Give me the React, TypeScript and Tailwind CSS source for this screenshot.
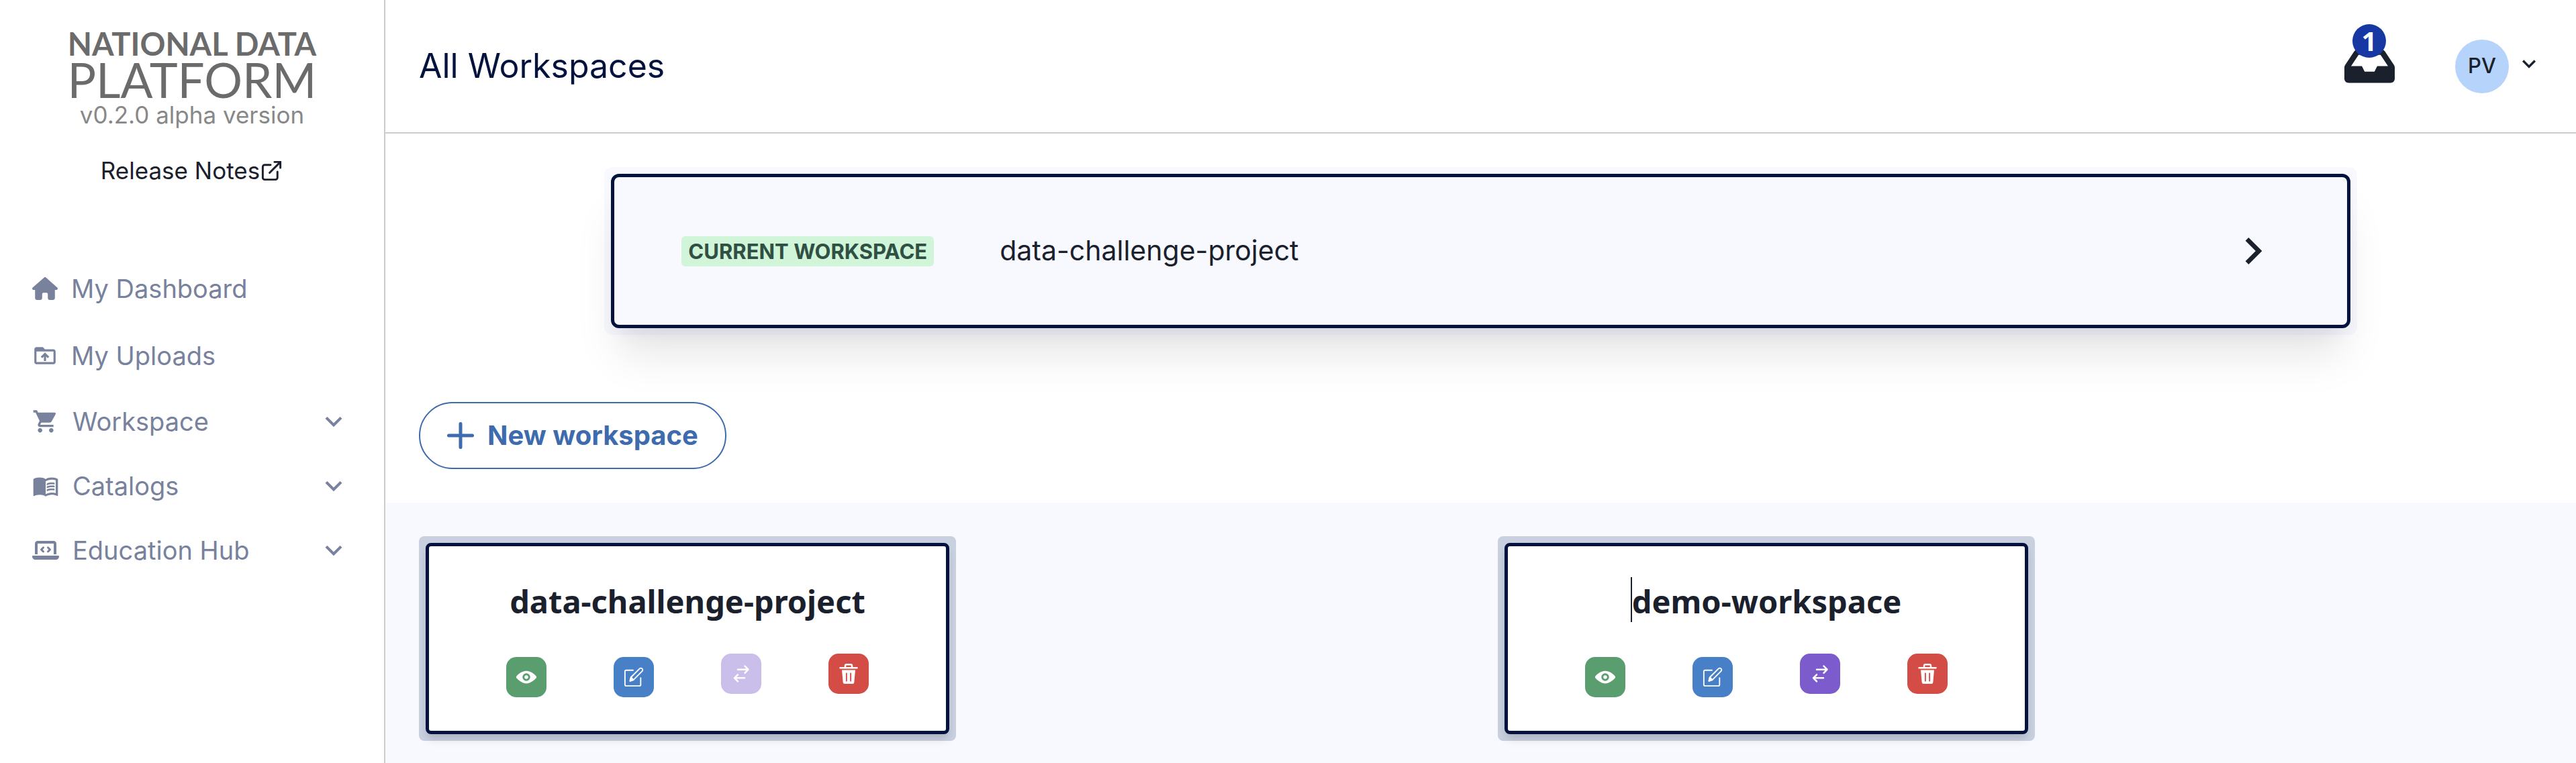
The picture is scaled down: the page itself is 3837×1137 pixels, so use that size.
import type { ReactNode } from "react";
import { FaHouse, FaLaptopCode } from "react-icons/fa6";
import { FaInbox } from "react-icons/fa";
import { MdDriveFolderUpload, MdMenuBook, MdShoppingCart } from "react-icons/md";

function ChevronDown({ className }: { className: string }) {
  return (
    <svg viewBox="0 0 24 24" className={className} aria-hidden="true">
      <path fill="currentColor" d="M16.59 8.59L12 13.17 7.41 8.59 6 10l6 6 6-6z" />
    </svg>
  );
}

function ChevronRight({ className }: { className: string }) {
  return (
    <svg viewBox="0 0 24 24" className={className} aria-hidden="true">
      <path fill="currentColor" d="M10 6L8.59 7.41 13.17 12l-4.58 4.59L10 18l6-6z" />
    </svg>
  );
}

function ExternalLinkIcon() {
  return (
    <svg
      viewBox="0 0 24 24"
      className="size-[35px]"
      fill="none"
      stroke="currentColor"
      strokeWidth="2"
      strokeLinecap="round"
      aria-hidden="true"
    >
      <path d="M18 13v6a2 2 0 0 1-2 2H5a2 2 0 0 1-2-2V8a2 2 0 0 1 2-2h6" />
      <path d="M15 3h6v6" />
      <path d="M10 14L20.500 3.500" />
    </svg>
  );
}

function PlusIcon() {
  return (
    <svg viewBox="0 0 40 40" className="size-10" stroke="currentColor" strokeWidth="5" strokeLinecap="round" aria-hidden="true">
      <path d="M20 2.500v35M2.500 20h35" />
    </svg>
  );
}

function ViewIcon() {
  return (
    <svg viewBox="0 0 24 24" className="size-[30px]" fill="currentColor" aria-hidden="true">
      <path d="M23.432,10.524C20.787,7.614,16.4,4.538,12,4.6,7.6,4.537,3.213,7.615.568,10.524a2.211,2.211,0,0,0,0,2.948C3.182,16.351,7.507,19.5,11.839,19.5h.308c4.347,0,8.671-3.149,11.288-6.029A2.21,2.21,0,0,0,23.432,10.524ZM7.4,12A4.6,4.6,0,1,1,12,16.6,4.6,4.6,0,0,1,7.4,12Z" />
      <circle cx="12" cy="12" r="2.200" />
    </svg>
  );
}

function EditIcon() {
  return (
    <svg
      viewBox="0 0 24 24"
      className="size-[30px]"
      fill="none"
      stroke="currentColor"
      strokeWidth="1.500"
      strokeLinecap="round"
      strokeLinejoin="round"
      aria-hidden="true"
    >
      <path d="M11.2 3.750H3A1.500 1.500 0 0 0 1.500 5.250V21A1.500 1.500 0 0 0 3 22.500H18.750A1.500 1.500 0 0 0 20.250 21V13" />
      <path d="M7.600 16.600L8.700 12.200 19 1.900a2.100 2.100 0 0 1 3 3L11.700 15.300z" />
      <path fill="currentColor" d="M7.600 16.600L8.700 12.200l3 3.100z" />
    </svg>
  );
}

function SwitchIcon() {
  return (
    <svg
      viewBox="0 0 30 30"
      className="size-[30px]"
      fill="none"
      stroke="currentColor"
      strokeWidth="2.500"
      strokeLinecap="round"
      strokeLinejoin="round"
      aria-hidden="true"
    >
      <path d="M10 8.700H25M20.500 3.500L25.500 8.700 20.500 13.900" />
      <path d="M20 21.300H5M10 16.400L5 21.300 10 26.400" />
    </svg>
  );
}

function DeleteIcon() {
  return (
    <svg viewBox="0 0 24 24" className="size-[30px]" fill="currentColor" aria-hidden="true">
      <path d="M19.452 7.5H4.547a.5.5 0 00-.5.545l1.287 14.136A2 2 0 007.326 24h9.347a2 2 0 001.992-1.819L19.95 8.045a.5.5 0 00-.129-.382.5.5 0 00-.369-.163zm-9.2 13a.75.75 0 01-1.5 0v-9a.75.75 0 011.5 0zm5 0a.75.75 0 01-1.5 0v-9a.75.75 0 011.5 0z" />
      <path d="M22 4h-4.75a.25.25 0 01-.25-.25V2.5A2.5 2.5 0 0014.5 0h-5A2.5 2.5 0 007 2.5v1.250a.25.25 0 01-.25.25H2a1 1 0 000 2h20a1 1 0 000-2zM9 3.75V2.5a.5.5 0 01.5-.5h5a.5.5 0 01.5.5v1.250a.25.25 0 01-.25.25h-5.5A.25.25 0 019 3.750z" />
    </svg>
  );
}

function NavLink({ icon, children }: { icon: ReactNode; children: ReactNode }) {
  return (
    <a href="#" className="flex h-[100px] items-center pl-12">
      <span className="flex w-[58px]">{icon}</span>
      {children}
    </a>
  );
}

function NavGroup({ icon, children }: { icon: ReactNode; children: ReactNode }) {
  return (
    <button type="button" aria-expanded="false" className="flex h-24 w-full items-center pr-[50px] pl-12 text-left">
      <span className="flex w-[60px]">{icon}</span>
      <span className="flex-1">{children}</span>
      <ChevronDown className="size-[50px]" />
    </button>
  );
}

function Sidebar() {
  return (
    <aside className="flex w-[574px] shrink-0 flex-col border-r-2 border-[#cbcccc]">
      <div className="flex flex-col items-center pt-10">
        <div className="flex flex-col items-center font-[Lato,sans-serif] text-[#6b6b6b]">
          <span className="text-[47px] leading-[50px] font-bold">NATIONAL DATA</span>
          <span className="text-[71px] leading-[58px]">PLATFORM</span>
        </div>
        <p className="text-[35px] leading-[46px] text-[#888888]">v0.2.0 alpha version</p>
        <a href="#" className="mt-[34px] flex items-center text-[35px] leading-[53px] text-[#1a202c]">
          Release Notes
          <ExternalLinkIcon />
        </a>
      </div>
      <nav className="mt-[99px] text-[38px] text-[#78829d]">
        <NavLink icon={<FaHouse className="size-[38px]" />}>My Dashboard</NavLink>
        <NavLink icon={<MdDriveFolderUpload className="size-[38px]" />}>My Uploads</NavLink>
        <NavGroup icon={<MdShoppingCart className="size-10" />}>Workspace</NavGroup>
        <NavGroup icon={<MdMenuBook className="size-10" />}>Catalogs</NavGroup>
        <NavGroup icon={<FaLaptopCode className="size-10" />}>Education Hub</NavGroup>
      </nav>
    </aside>
  );
}

function Header() {
  return (
    <header className="flex h-[199px] items-center justify-between border-b-2 border-[#cbcccc] px-[50px]">
      <h1 className="text-[50px] text-[#03133d]">All Workspaces</h1>
      <div className="flex items-center gap-[90px]">
        <button type="button" aria-label="Inbox, 1 new message" className="relative">
          <FaInbox className="size-[75px]" />
          <span className="absolute -top-[25px] left-3 flex size-[50px] items-center justify-center rounded-full bg-[#1738a3] font-['Noto_Sans',sans-serif] text-[40px] leading-none font-bold text-white">
            1
          </span>
        </button>
        <button type="button" aria-label="Account menu" className="flex items-center gap-[10px]">
          <span className="flex size-20 items-center justify-center rounded-full bg-[#b6d4fb] text-[31px] font-medium">
            PV
          </span>
          <ChevronDown className="mb-2 size-10" />
        </button>
      </div>
    </header>
  );
}

function CurrentWorkspace() {
  return (
    <div className="mx-auto w-4/5 rounded-xl bg-[#f8f9ff] p-[10px]">
      <a
        href="#"
        className="flex h-[230px] items-center rounded-xl border-[5px] border-[#03133d] bg-[#f8f9ff] px-[100px] shadow-[0_50px_62px_-12px_rgba(0,0,0,0.1),0_25px_25px_-12px_rgba(0,0,0,0.04)]"
      >
        <span className="rounded-md bg-[#d0f5d9] px-[10px] text-[31px] leading-[45px] font-bold text-[#2f5043]">
          CURRENT WORKSPACE
        </span>
        <span className="ml-[98px] flex-1 text-[41px]">data-challenge-project</span>
        <ChevronRight className="size-20" />
      </a>
    </div>
  );
}

const actionButton = "flex size-[60px] items-center justify-center rounded-[15px] text-white";

function WorkspaceCard({ name, current, caret }: { name: string; current?: boolean; caret?: boolean }) {
  return (
    <article className="w-[800px] rounded-lg bg-[#c9d0df] p-[10px]">
      <div className="rounded-lg border-[5px] border-[#03133d] bg-white pt-[46px] pb-[50px] shadow-[0_10px_15px_-2px_rgba(0,0,0,0.1),0_5px_10px_-2px_rgba(0,0,0,0.06)]">
        <h2 className="flex justify-center font-['Noto_Sans',sans-serif] text-[47px] leading-[72px] font-bold">
          {caret && <span className="h-[67px] w-[2px] bg-[#1a202c]" />}
          {name}
        </h2>
        <div className="mt-[42px] flex items-start justify-center gap-[100px]">
          <a href="#" aria-label={"View " + name} className={actionButton + " mt-[5px] bg-[#5a9e6f]"}>
            <ViewIcon />
          </a>
          <a href="#" aria-label={"Edit " + name} className={actionButton + " mt-[5px] bg-[#4880c8]"}>
            <EditIcon />
          </a>
          <button
            type="button"
            aria-label={"Switch to " + name}
            disabled={current}
            className={actionButton + (current ? " bg-[#cabfea]" : " bg-[#7c5ccd]")}
          >
            <SwitchIcon />
          </button>
          <button type="button" aria-label={"Delete " + name} className={actionButton + " bg-[#d34c46]"}>
            <DeleteIcon />
          </button>
        </div>
      </div>
    </article>
  );
}

export default function App() {
  return (
    <div className="flex min-h-screen bg-white font-[Inter,sans-serif] text-[#1a202c]">
      <Sidebar />
      <div className="flex min-w-0 flex-1 flex-col">
        <Header />
        <main className="flex flex-1 flex-col pt-[50px]">
          <CurrentWorkspace />
          <div className="px-[50px] pt-[100px] pb-[50px]">
            <button
              type="button"
              className="flex h-[100px] items-center gap-5 rounded-full border-2 border-[#3e6bad] px-10 text-[40px] font-bold text-[#3e6bad]"
            >
              <PlusIcon />
              New workspace
            </button>
          </div>
          <section className="grid flex-1 grid-cols-2 content-start gap-[50px] bg-[#f8f9ff] p-[50px] pb-8">
            <WorkspaceCard name="data-challenge-project" current />
            <WorkspaceCard name="demo-workspace" caret />
          </section>
        </main>
      </div>
    </div>
  );
}
